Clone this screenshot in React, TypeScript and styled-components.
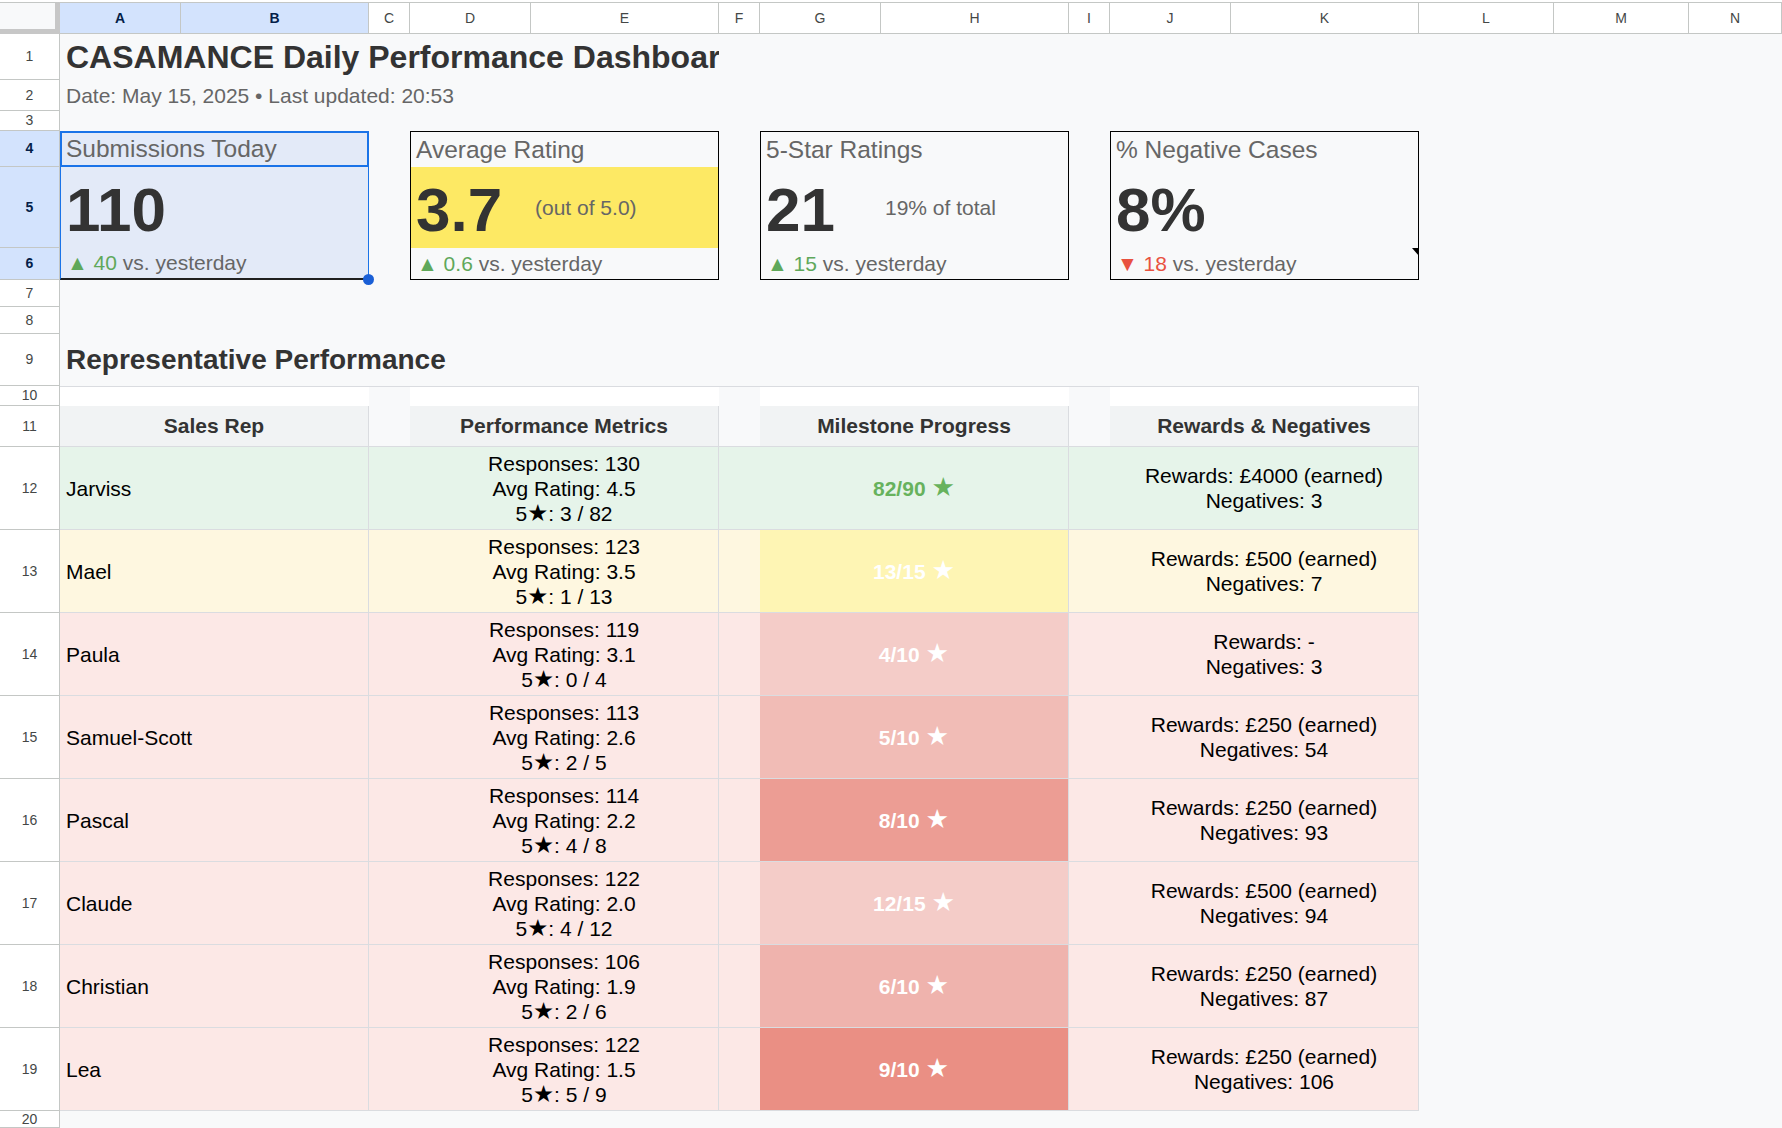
import React from "react";
import styled, { createGlobalStyle } from "styled-components";

const GlobalStyle = createGlobalStyle`
  html, body {
    margin: 0;
    padding: 0;
    background: #fff;
  }
  body {
    font-family: "Liberation Sans", Arial, "DejaVu Sans", sans-serif;
    overflow: hidden;
  }
  * {
    box-sizing: border-box;
  }
`;

const GRID_LINE = "#dadce0";
const HEADER_LINE = "#c4c7c5";
const SHEET_BG = "#f8f9fa";

const COLUMNS = [
  { key: "A", width: 121, selected: true },
  { key: "B", width: 188, selected: true },
  { key: "C", width: 41 },
  { key: "D", width: 121 },
  { key: "E", width: 188 },
  { key: "F", width: 41 },
  { key: "G", width: 121 },
  { key: "H", width: 188 },
  { key: "I", width: 41 },
  { key: "J", width: 121 },
  { key: "K", width: 188 },
  { key: "L", width: 135 },
  { key: "M", width: 135 },
  { key: "N", width: 0 },
];

// row 20 is only partly on screen
const ROW_HEIGHTS = [46, 31, 20, 36, 81, 32, 27, 27, 52, 20, 41, 83, 83, 83, 83, 83, 83, 83, 83, 17];
const SELECTED_ROWS = [4, 5, 6];

type Tone = "green" | "yellow" | "red";

const TONES: Record<Tone, string> = {
  green: "#e6f4ea",
  yellow: "#fef7e0",
  red: "#fce8e6",
};

const reps = [
  { name: "Jarviss", responses: 130, avg: "4.5", five: "3 / 82", milestone: "82/90", tone: "green" as Tone, fill: "#e6f4ea", ink: "#67b25d", rewards: "£4000 (earned)", negatives: 3 },
  { name: "Mael", responses: 123, avg: "3.5", five: "1 / 13", milestone: "13/15", tone: "yellow" as Tone, fill: "#fef5b4", ink: "#fff", rewards: "£500 (earned)", negatives: 7 },
  { name: "Paula", responses: 119, avg: "3.1", five: "0 / 4", milestone: "4/10", tone: "red" as Tone, fill: "#f4ccc8", ink: "#fff", rewards: "-", negatives: 3 },
  { name: "Samuel-Scott", responses: 113, avg: "2.6", five: "2 / 5", milestone: "5/10", tone: "red" as Tone, fill: "#f1bcb6", ink: "#fff", rewards: "£250 (earned)", negatives: 54 },
  { name: "Pascal", responses: 114, avg: "2.2", five: "4 / 8", milestone: "8/10", tone: "red" as Tone, fill: "#ec9d94", ink: "#fff", rewards: "£250 (earned)", negatives: 93 },
  { name: "Claude", responses: 122, avg: "2.0", five: "4 / 12", milestone: "12/15", tone: "red" as Tone, fill: "#f4ccc8", ink: "#fff", rewards: "£500 (earned)", negatives: 94 },
  { name: "Christian", responses: 106, avg: "1.9", five: "2 / 6", milestone: "6/10", tone: "red" as Tone, fill: "#efb3ad", ink: "#fff", rewards: "£250 (earned)", negatives: 87 },
  { name: "Lea", responses: 122, avg: "1.5", five: "5 / 9", milestone: "9/10", tone: "red" as Tone, fill: "#ea8f84", ink: "#fff", rewards: "£250 (earned)", negatives: 106 },
];

const Page = styled.div`
  width: 1782px;
  height: 1128px;
  overflow: hidden;
  display: flex;
  flex-direction: column;
  background: #fff;
`;

// column letters bar
const ColumnBar = styled.div`
  display: flex;
  height: 34px;
  flex: 0 0 34px;
  background: #fff;
`;

const Corner = styled.div`
  flex: 0 0 60px;
  margin-top: 2px;
  border-top: 1px solid ${HEADER_LINE};
  border-right: 5px solid #c7c7c7;
  border-bottom: 5px solid #c7c7c7;
  background: ${SHEET_BG};
`;

const ColHeader = styled.div<{ $w: number; $selected?: boolean }>`
  flex: ${({ $w }) => ($w ? `0 0 ${$w}px` : "1 1 auto")};
  margin-top: 2px;
  border-top: 1px solid ${HEADER_LINE};
  border-right: 1px solid ${HEADER_LINE};
  border-bottom: 1px solid ${HEADER_LINE};
  display: flex;
  align-items: center;
  justify-content: center;
  font-size: 14px;
  font-weight: ${({ $selected }) => ($selected ? 700 : 400)};
  color: ${({ $selected }) => ($selected ? "#041e49" : "#444746")};
  background: ${({ $selected }) => ($selected ? "#d3e3fd" : "#fff")};
`;

const Body = styled.div`
  display: flex;
  flex: 1 1 auto;
  min-height: 0;
`;

const RowHeaders = styled.div`
  flex: 0 0 60px;
  display: flex;
  flex-direction: column;
  background: #fff;
  border-right: 1px solid ${HEADER_LINE};
`;

const RowNum = styled.div<{ $h: number; $selected?: boolean }>`
  flex: 0 0 ${({ $h }) => $h}px;
  height: ${({ $h }) => $h}px;
  border-bottom: 1px solid ${HEADER_LINE};
  display: flex;
  align-items: center;
  justify-content: center;
  font-size: 14px;
  line-height: 15px;
  font-weight: ${({ $selected }) => ($selected ? 700 : 400)};
  color: ${({ $selected }) => ($selected ? "#041e49" : "#444746")};
  background: ${({ $selected }) => ($selected ? "#d3e3fd" : "#fff")};
`;

const Canvas = styled.div`
  flex: 1 1 auto;
  display: flex;
  flex-direction: column;
  background: ${SHEET_BG};
`;

const Title = styled.h1`
  margin: 0;
  width: 659px;
  height: 46px;
  line-height: 46px;
  padding-left: 6px;
  font-size: 32px;
  font-weight: 700;
  color: #333;
  white-space: nowrap;
  overflow: hidden;
`;

const Subtitle = styled.div`
  height: 31px;
  line-height: 31px;
  padding-left: 6px;
  font-size: 21px;
  color: #666;
  white-space: nowrap;
`;

const Spacer = styled.div<{ $h: number }>`
  flex: 0 0 ${({ $h }) => $h}px;
`;

const CardsRow = styled.div`
  display: grid;
  grid-template-columns: repeat(4, 309px);
  column-gap: 41px;
  height: 149px;
`;

const Card = styled.div<{ $selected?: boolean }>`
  position: relative;
  display: grid;
  grid-template-columns: 120px 1fr;
  grid-template-rows: 35px 81px 1fr;
  border: 1px solid ${({ $selected }) => ($selected ? "#1a73e8" : "#000")};
  border-bottom: ${({ $selected }) => ($selected ? "2px solid #1f1f1f" : "1px solid #000")};
  background: ${({ $selected }) => ($selected ? "#e3eaf8" : "transparent")};
`;

const CardLabel = styled.div<{ $active?: boolean }>`
  grid-column: 1 / 3;
  display: flex;
  align-items: center;
  padding-left: ${({ $active }) => ($active ? 4 : 5)}px;
  font-size: 24.5px;
  color: #666;
  white-space: nowrap;
  margin: ${({ $active }) => ($active ? "-1px -1px 0 -1px" : "0")};
  border: ${({ $active }) => ($active ? "2px solid #1a73e8" : "none")};
`;

const ValueBand = styled.div<{ $fill?: string }>`
  grid-column: 1 / 3;
  display: grid;
  grid-template-columns: 120px 1fr;
  background: ${({ $fill }) => $fill || "transparent"};
`;

const BigValue = styled.div`
  display: flex;
  align-items: flex-end;
  padding: 0 0 3px 5px;
  font-size: 62px;
  line-height: 1.15;
  font-weight: 700;
  color: #333;
  white-space: nowrap;
`;

const ValueNote = styled.div`
  display: flex;
  align-items: center;
  padding-left: 4px;
  font-size: 21px;
  color: #666;
  white-space: nowrap;
`;

const Delta = styled.div`
  grid-column: 1 / 3;
  display: flex;
  align-items: center;
  padding-left: 6px;
  font-size: 21px;
  color: #666;
  white-space: pre;
`;

const DeltaMark = styled.span<{ $dir: "up" | "down" }>`
  color: ${({ $dir }) => ($dir === "up" ? "#5fa85a" : "#e8523f")};
`;

const NoteFlag = styled.div`
  position: absolute;
  right: -1px;
  top: 116px;
  width: 0;
  height: 0;
  border-top: 8px solid #000;
  border-left: 7px solid transparent;
`;

const FillHandle = styled.div`
  position: absolute;
  right: -6px;
  bottom: -7px;
  width: 11px;
  height: 11px;
  border-radius: 50%;
  background: #1a5fd6;
  z-index: 2;
`;

const SectionTitle = styled.h2`
  margin: 0;
  height: 52px;
  line-height: 52px;
  padding-left: 6px;
  font-size: 28px;
  font-weight: 700;
  color: #333;
  white-space: nowrap;
`;

// representative table
const Table = styled.div`
  display: grid;
  grid-template-columns: 309px 41px 309px 41px 309px 41px 309px;
  grid-template-rows: 20px 41px repeat(8, 83px);
  width: 1359px;
`;

const GapCell = styled.div<{ $spacer?: boolean; $edge?: boolean }>`
  border-top: 1px solid ${GRID_LINE};
  border-right: ${({ $edge }) => ($edge ? `1px solid ${GRID_LINE}` : "none")};
  background: ${({ $spacer }) => ($spacer ? SHEET_BG : "#fff")};
`;

const HeadCell = styled.div<{ $spacer?: boolean }>`
  display: flex;
  align-items: center;
  justify-content: center;
  border-bottom: 1px solid ${GRID_LINE};
  border-right: ${({ $spacer }) => ($spacer ? "none" : `1px solid ${GRID_LINE}`)};
  background: ${({ $spacer }) => ($spacer ? SHEET_BG : "#f1f3f4")};
  font-size: 21px;
  font-weight: 700;
  color: #333;
`;

const DataCell = styled.div<{ $bg: string }>`
  display: flex;
  flex-direction: column;
  justify-content: center;
  border-bottom: 1px solid ${GRID_LINE};
  border-right: 1px solid ${GRID_LINE};
  background: ${({ $bg }) => $bg};
  font-size: 21px;
  line-height: 25px;
  color: #000;
  white-space: nowrap;
`;

const NameCell = styled(DataCell)`
  padding-left: 6px;
`;

const SpacerCell = styled(DataCell)`
  border-right: none;
`;

const CenterCell = styled(DataCell)`
  align-items: center;
  text-align: center;
`;

const MilestoneCell = styled(DataCell)<{ $ink: string }>`
  align-items: center;
  font-weight: 700;
  color: ${({ $ink }) => $ink};
`;

const Star = styled.span<{ $scale?: number }>`
  font-family: "DejaVu Sans", sans-serif;
  font-size: ${({ $scale }) => $scale || 1.12}em;
  line-height: 0;
`;

const App = () => {
  return (
    <Page>
      <GlobalStyle />
      <ColumnBar>
        <Corner />
        {COLUMNS.map((c) => (
          <ColHeader key={c.key} $w={c.width} $selected={c.selected}>
            {c.key}
          </ColHeader>
        ))}
      </ColumnBar>
      <Body>
        <RowHeaders>
          {ROW_HEIGHTS.map((h, i) => (
            <RowNum key={i} $h={h} $selected={SELECTED_ROWS.includes(i + 1)}>
              {i + 1}
            </RowNum>
          ))}
        </RowHeaders>
        <Canvas>
          <Title>CASAMANCE Daily Performance Dashboard</Title>
          <Subtitle>Date: May 15, 2025 • Last updated: 20:53</Subtitle>
          <Spacer $h={20} />
          <CardsRow>
            <Card $selected>
              <CardLabel $active>Submissions Today</CardLabel>
              <ValueBand>
                <BigValue>110</BigValue>
                <ValueNote />
              </ValueBand>
              <Delta>
                <DeltaMark $dir="up">▲ 40</DeltaMark> vs. yesterday
              </Delta>
              <FillHandle />
            </Card>
            <Card>
              <CardLabel>Average Rating</CardLabel>
              <ValueBand $fill="#fde964">
                <BigValue>3.7</BigValue>
                <ValueNote>(out of 5.0)</ValueNote>
              </ValueBand>
              <Delta>
                <DeltaMark $dir="up">▲ 0.6</DeltaMark> vs. yesterday
              </Delta>
            </Card>
            <Card>
              <CardLabel>5-Star Ratings</CardLabel>
              <ValueBand>
                <BigValue>21</BigValue>
                <ValueNote>19% of total</ValueNote>
              </ValueBand>
              <Delta>
                <DeltaMark $dir="up">▲ 15</DeltaMark> vs. yesterday
              </Delta>
            </Card>
            <Card>
              <CardLabel>% Negative Cases</CardLabel>
              <ValueBand>
                <BigValue>8%</BigValue>
                <ValueNote />
              </ValueBand>
              <Delta>
                <DeltaMark $dir="down">▼ 18</DeltaMark> vs. yesterday
              </Delta>
              <NoteFlag />
            </Card>
          </CardsRow>
          <Spacer $h={54} />
          <SectionTitle>Representative Performance</SectionTitle>
          <Table>
            <GapCell />
            <GapCell $spacer />
            <GapCell />
            <GapCell $spacer />
            <GapCell />
            <GapCell $spacer />
            <GapCell $edge />

            <HeadCell>Sales Rep</HeadCell>
            <HeadCell $spacer />
            <HeadCell>Performance Metrics</HeadCell>
            <HeadCell $spacer />
            <HeadCell>Milestone Progress</HeadCell>
            <HeadCell $spacer />
            <HeadCell>Rewards &amp; Negatives</HeadCell>

            {reps.map((r) => {
              const bg = TONES[r.tone];
              return (
                <React.Fragment key={r.name}>
                  <NameCell $bg={bg}>{r.name}</NameCell>
                  <SpacerCell $bg={bg} />
                  <CenterCell $bg={bg}>
                    <div>Responses: {r.responses}</div>
                    <div>Avg Rating: {r.avg}</div>
                    <div>
                      5<Star>★</Star>: {r.five}
                    </div>
                  </CenterCell>
                  <SpacerCell $bg={bg} />
                  <MilestoneCell $bg={r.fill} $ink={r.ink}>
                    <div>
                      {r.milestone} <Star $scale={1.25}>★</Star>
                    </div>
                  </MilestoneCell>
                  <SpacerCell $bg={bg} />
                  <CenterCell $bg={bg}>
                    <div>Rewards: {r.rewards}</div>
                    <div>Negatives: {r.negatives}</div>
                  </CenterCell>
                </React.Fragment>
              );
            })}
          </Table>
        </Canvas>
      </Body>
    </Page>
  );
};

export default App;
